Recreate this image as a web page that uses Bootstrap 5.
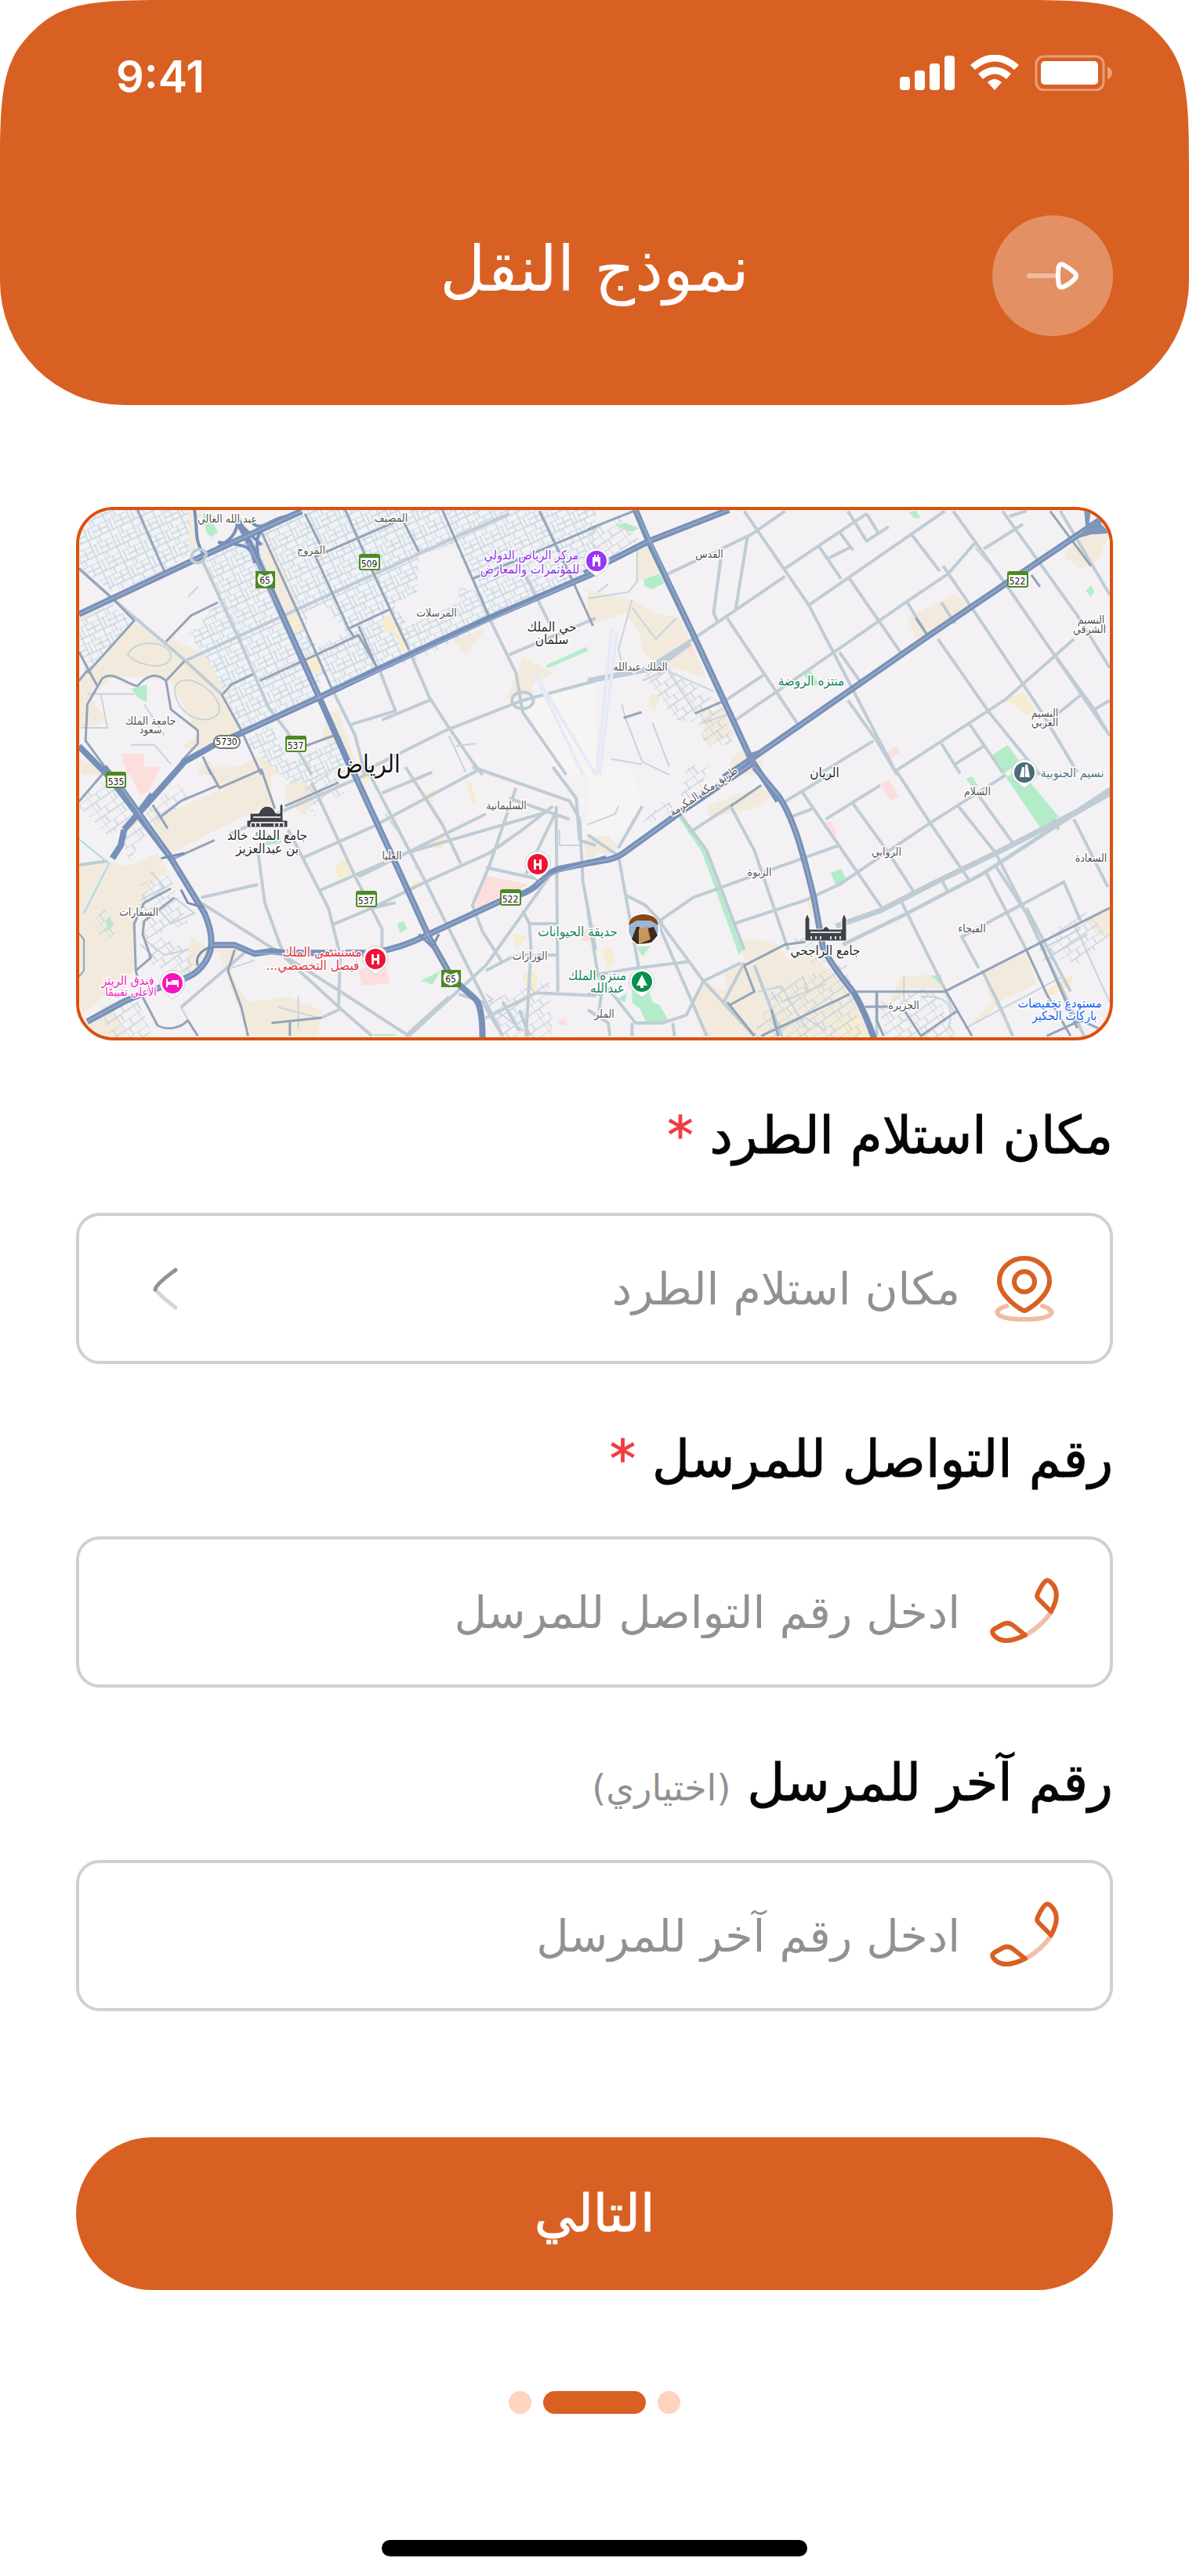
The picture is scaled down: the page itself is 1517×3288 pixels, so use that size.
<!DOCTYPE html>
<html lang="ar" dir="rtl">
<head>
<meta charset="utf-8">
<meta name="viewport" content="width=device-width, initial-scale=1">
<title>نموذج النقل</title>
<link href="https://cdn.jsdelivr.net/npm/bootstrap@5.3.0/dist/css/bootstrap.min.css" rel="stylesheet">
<style>
  :root { --brand: #d96023; --line: #d0d0d0; --hint: #919191; --gutter: 97px; }
  body { font-family: "DejaVu Sans", sans-serif; background: #fff; color: #050505; }
  .px-gutter { padding-inline: var(--gutter); }

  .app-header { background: var(--brand); border-radius: 0 0 158px 158px; padding-bottom: 88px; }
  .corner { position: absolute; top: 0; width: 215px; height: 215px; }
  .status-bar { height: 188px; padding: 70px 97px 0 148px; }
  .clock { font: 600 56px/56px Inter, sans-serif; }
  .title-row { padding-top: 87px; }
  .back-btn { width: 154px; height: 154px; background: rgba(255,255,255,.3); }
  .back-spacer { width: 154px; }
  .page-title { font-size: 80px; line-height: 120px; font-weight: 400; padding-bottom: 16px; }

  .map-frame { margin-top: 130px; border: 4px solid #dc500d; border-radius: 48px; }
  .map-frame svg { width: 100%; height: auto; }

  .field-label { font-size: 66px; line-height: 100px; margin-top: 72px; margin-bottom: 48px; -webkit-text-stroke: 1px currentColor; }
  .star { color: #f03c41; }
  .optional { font-size: 46px; line-height: 1; color: var(--hint); -webkit-text-stroke: 0; }
  .field-box { height: 193px; border: 4px solid var(--line); border-radius: 30px; padding-inline: 59px 90px; gap: 32px; }
  .field-icon { width: 100px; height: 100px; }
  .field-input { font-size: 57px; line-height: 90px; height: 100px; color: var(--hint); background: transparent; min-width: 0; }
  .field-input::placeholder { color: var(--hint); opacity: 1; }
  select.field-input { appearance: none; }
  .chevron { width: 40px; height: 64px; }

  .next-btn { height: 195px; margin-top: 161px; background: var(--brand); font-size: 66px; line-height: 100px; -webkit-text-stroke: 1px currentColor; }
  .next-btn:hover { background: #c9561c; }
  .steps { gap: 15px; margin-top: 129px; }
  .step-dot { width: 29px; height: 29px; background: #ffd3bd; }
  .step-now { width: 131px; height: 29px; background: var(--brand); }
  .home-bar { width: 543px; height: 21px; background: #000; margin: 161px auto 25px; }

  .m path { vector-effect: non-scaling-stroke; }
  .hw { fill: none; stroke: #7790b9; stroke-width: 8; stroke-linejoin: round; }
  .hl { fill: none; stroke: #94a8c8; stroke-width: 2; }
  .md { fill: none; stroke: #94a4b9; stroke-width: 3; stroke-linejoin: round; }
  .mn { fill: none; stroke: #bfccd6; stroke-width: 4; stroke-linejoin: round; }
  .th { fill: none; stroke: #c8d3dc; stroke-width: 2; }
  .bg { fill: #f2ebdd; } .yl { fill: #f6ecd0; } .pk { fill: #fcdedd; } .gr { fill: #b3ecc9; } .ld { fill: #f3f1f3; }
  .map-text text { font-family: "DejaVu Sans Condensed", "DejaVu Sans", sans-serif; text-anchor: middle; paint-order: stroke; stroke: #fff; stroke-width: 3px; fill: #555; font-size: 14px; }
  .map-text .t-dark { fill: #2b2b2b; font-size: 17px; }
  .map-text .t-city { fill: #111; font-size: 31px; }
  .map-text .t-green { fill: #16865a; font-size: 17px; }
  .map-text .t-purple { fill: #9334e6; font-size: 16px; }
  .map-text .t-red { fill: #e03846; font-size: 17px; }
  .map-text .t-pink { fill: #f01cc0; font-size: 16px; }
  .map-text .t-slate { fill: #5a7684; font-size: 16px; }
  .map-text .t-blue { fill: #1a66ef; font-size: 16px; }
  .map-text .t-num { fill: #222; stroke: none; font-size: 12px; }
</style>
</head>
<body>
<header class="app-header position-relative text-white">
  <svg class="corner start-0" viewBox="0 0 215 215" aria-hidden="true"><path fill="#fff" d="M0 0H215C150 0 105 1 73 17C52 27 27 52 17 73C1 105 0 150 0 215Z"/></svg>
  <svg class="corner end-0" viewBox="0 0 215 215" aria-hidden="true"><path fill="#fff" d="M215 0H0C65 0 110 1 142 17C163 27 188 52 198 73C214 105 215 150 215 215Z"/></svg>
  <div class="status-bar d-flex justify-content-between align-items-start" dir="ltr">
    <span class="clock">9:41</span>
    <svg width="272" height="46" viewBox="1148 70 272 46" fill="#fff" aria-hidden="true">
      <rect x="1148" y="98" width="13" height="17" rx="4"/><rect x="1167" y="90" width="13" height="25" rx="4"/><rect x="1186" y="81" width="13" height="34" rx="4"/><rect x="1205" y="71" width="13" height="44" rx="4"/>
      <path d="M1238 83Q1269 56 1300 83L1294 89Q1269 68 1244 89Z"/>
      <path d="M1248 94Q1269 77 1290 94L1284 101Q1269 88 1254 101Z"/>
      <path d="M1260 105Q1269 97 1278 105L1269 115Z"/>
      <rect x="1322" y="72" width="86" height="43" rx="10" fill="none" stroke="#fff" stroke-width="3" opacity=".4"/>
      <rect x="1328" y="78" width="73" height="30" rx="5"/>
      <path opacity=".4" d="M1413 85Q1419 88 1419 93T1413 102Z"/>
    </svg>
  </div>
  <div class="title-row px-gutter d-flex align-items-center">
    <button type="button" class="back-btn btn rounded-circle border-0 p-0 flex-shrink-0" aria-label="رجوع">
      <svg width="154" height="154" viewBox="1266 275 154 154" fill="none" stroke="#fff" stroke-width="6" stroke-linecap="round" stroke-linejoin="round" aria-hidden="true"><path opacity=".4" d="M1313 352H1348"/><path d="M1350 352C1350 345 1350 343 1351 340Q1352 336 1357 338Q1366 343 1372 349Q1374 352 1372 355Q1366 362 1357 366Q1352 368 1351 364Q1350 360 1350 352Z"/></svg>
    </button>
    <h1 class="page-title flex-fill text-center m-0">نموذج النقل</h1>
    <span class="back-spacer flex-shrink-0"></span>
  </div>
</header>

<main class="px-gutter">
  <div class="map-frame overflow-hidden">
    <svg class="m d-block" viewBox="101 652 1315 673" role="img" aria-label="خريطة الرياض">
      <defs>
        <pattern id="blocks" width="30" height="22" patternUnits="userSpaceOnUse" patternTransform="rotate(-25)"><rect width="30" height="22" fill="#f0f2f5"/><path d="M0 0H30M0 7H20M0 14H30M10 0V14M20 0V22M0 0V22M5 14V22M25 0V14" stroke="#c9d4dd" stroke-width="1.4" fill="none"/></pattern>
        <pattern id="blocks2" width="26" height="20" patternUnits="userSpaceOnUse" patternTransform="rotate(-35)"><path d="M0 0H26M0 10H26M0 0V20M13 0V10M6 10V20" stroke="#c8d3dc" stroke-width="1.5" fill="none"/></pattern>
      </defs>
      <rect x="90" y="640" width="1340" height="700" fill="#f3f1f3"/>

      <!-- areas -->
      <g transform="translate(90 640) scale(.4273 .3333)">
        <path class="bg" d="M330 35H390L375 190L280 270L120 365L25 430V470L100 420L270 290L300 220L325 180ZM60 640L190 470L250 500L410 590L470 740L510 880L380 960L330 940L380 900L300 690L130 670L60 760L120 850L25 870V690ZM560 170L600 180L690 430L660 440ZM770 810L800 805L850 1000L870 1050H840L750 900ZM1140 530L1240 490L1180 590ZM1350 600L1445 660L1380 700L1380 740L1300 760ZM1400 40H1500L1420 90ZM560 980L620 1000V1050H380L400 980L450 1050ZM150 1050H30L25 990Z"/>
        <path class="ld" d="M130 760L190 780L210 830L280 900L260 1010L120 1050L60 930Z"/>
        <path class="pk" d="M150 970H218V1010L260 1050H170ZM570 390L590 380L595 405L575 415Z"/>
        <path class="gr" d="M183 720L228 705V770L200 755ZM1420 630L1540 560L1545 575L1425 642Z"/>
        <path fill="#f6f5f3" d="M1380 740L1568 700V1050H1450L1350 810Z"/>
      </g>
      <path fill="url(#blocks)" d="M101 652H240L242 708L208 732L145 757L101 725ZM262 714L390 652H760V730L620 797L545 838L408 885L352 913L308 935L284 880L270 850L240 810L262 790L278 760ZM101 795L140 770L168 795L110 860L101 830ZM310 945L345 925L370 975L430 945L445 985L390 1000L405 1050L380 1010ZM290 890L400 835L405 882L310 925Z"/>
      <g transform="translate(90 640) scale(.4273 .3333)">
        <path class="bg" d="M560 170L600 180L690 430L640 450Z"/>
        <path class="yl" d="M640 440L670 430L695 490L665 510ZM700 605L735 595L750 650L720 665ZM930 460L955 430L975 495L1020 590L995 595L970 510L935 500Z"/>
        <path class="ld" d="M200 455L310 300L345 360L440 400L360 440L285 540ZM1040 210L1145 165L1210 345L1160 330V390L1010 480L965 400L1035 350ZM380 130C380 90 410 40 440 40C500 60 490 110 470 150C450 180 380 200 380 130ZM710 420L760 400L820 500L740 560L700 500ZM740 670L780 660L780 720L750 740Z"/>
        <path class="gr" d="M395 50H410L440 120L420 140L405 120Z"/>
      </g>
      <g transform="translate(750 640) scale(.4337 .3333)">
        <path class="bg" d="M145 180L180 160L220 270L140 310ZM0 340L50 360L130 380L200 430L270 450L300 530L350 680L280 650L200 620L160 580L150 500L110 430L0 480ZM940 450L1080 355L1120 400L970 545ZM1400 210L1460 120L1535 130L1500 230L1450 265ZM330 820L400 790L430 900L350 935ZM420 980L470 950L520 1000L490 1050H420ZM180 740H215L200 800L180 790Z"/>
        <path class="yl" d="M1230 760L1280 735L1320 800L1290 820Z"/>
        <path class="gr" d="M165 300L210 280L225 315L190 340L165 325ZM80 95L110 85L150 105L130 120ZM945 45L965 38L978 65L960 68ZM1465 345L1480 325L1490 345L1480 370ZM635 665L655 650L680 700L660 715ZM1190 975L1235 935L1270 1000L1220 1050Z"/>
        <path class="pk" d="M290 555L305 545L318 590L300 600ZM875 970L908 940L918 962L885 992Z"/>
      </g>
      <g transform="translate(90 980) scale(.4273 .3333)">
        <path class="bg" d="M240 150L270 190L440 90L400 0H600V140L470 220L300 330L250 230ZM25 380L120 360L170 380L260 330L290 400L240 450L190 600L190 780L25 960ZM360 650L420 700L510 690L490 730L480 800L530 900L650 880L750 930L740 1030H530L440 700L330 840ZM25 990L120 900L170 1030H60ZM640 70L690 50L740 90L700 190L640 130ZM1530 280H1568V360H1540Z"/>
        <path class="yl" d="M790 380L820 350L840 410L800 430ZM1045 110L1090 85L1080 150ZM1180 60H1195L1215 140H1200ZM1055 290L1120 250L1110 320ZM1320 640L1365 645L1330 700ZM1350 790H1395L1390 860L1360 850ZM1010 460L1040 430L1050 450L1020 470ZM860 20L900 30L880 70Z"/>
        <path class="pk" d="M170 0H270L230 100L205 105ZM1240 415L1365 450L1280 520L1205 540ZM860 775L940 760L955 830L870 835ZM1455 968L1480 965L1482 990L1460 988ZM1520 640L1568 600V660L1530 670Z"/>
        <path class="gr" d="M570 290L625 265L630 290L580 300ZM975 600L995 592L1005 620L985 635ZM1045 820L1105 780L1080 835L1065 825ZM105 590L115 575L125 610L112 630ZM905 1022H970V1030H905Z"/>
      </g>
      <g transform="translate(750 980) scale(.4337 .3333)">
        <path fill="#f6f5f3" d="M0 0H130L160 160L120 260L0 270Z"/>
        <path class="bg" d="M430 110L510 75L540 110L510 150L360 195L350 150ZM450 660L500 660L560 680L590 740L660 700L700 770L790 870L840 1030H340L300 900L340 820L410 860L400 790L460 750ZM1160 780L1290 710L1320 830L1190 910ZM880 920L920 800L1020 795L1050 850H950ZM1460 580L1535 530V640L1500 650ZM1130 980L1200 880L1200 920L1150 980ZM0 270L60 260L90 310L60 340L0 320Z"/>
        <path class="yl" d="M640 500H660V580ZM740 980L790 940L820 1030H740ZM40 700L65 690L80 740L60 780ZM1340 860L1430 790L1420 840L1350 880Z"/>
        <path class="gr" d="M1230 40L1270 10L1385 190L1335 240ZM1113 45L1130 36L1148 70L1135 85ZM715 405L745 390L760 430L730 455ZM265 190L275 190L345 310L380 440L455 700L445 720L370 450L335 325ZM130 850L180 860L190 900L210 910L240 975L170 975L155 930L130 900ZM85 890L115 865L110 900ZM1010 800L1040 795L1035 830Z"/>
        <path class="pk" d="M860 65L885 50L915 115L890 130ZM700 210L712 205L735 255L722 262Z"/>
      </g>
      <path fill="url(#blocks2)" d="M750 680L790 660L815 690L780 712L755 705ZM820 860L850 850L920 900L915 925L860 920ZM890 920L922 905L935 950L900 955ZM875 980L905 975L890 1020H868ZM820 1050L850 1020L862 1035L825 1055ZM1010 1200L1045 1195L1060 1225L1040 1235ZM990 1260L1080 1230L1100 1325H960ZM1325 1200L1385 1165L1416 1195L1380 1230L1335 1225ZM1120 1280L1190 1260L1220 1325H1130ZM130 1290L175 1275L195 1325H140ZM190 1030L230 1000L240 1020L270 1000L190 1060L165 1100L155 1070ZM120 1000L150 995L170 1040L140 1070L100 1030ZM385 1000L425 985L440 1015L400 1030ZM180 1130L215 1115L240 1180L200 1195L250 1215L240 1250L190 1230L180 1180ZM115 1180L135 1160L150 1190L135 1205ZM620 1280L700 1250L705 1325H640Z"/>

      <!-- minor streets -->
      <g transform="translate(90 640) scale(.4273 .3333)">
        <path class="mn" d="M340 615L500 520L1150 140L1310 50M390 220L500 520L590 790L650 890L720 1050M25 260L130 380L340 610L450 740M1010 570L1070 750L1130 870L1200 1000L1230 1050M920 640L970 805L830 860M930 840L1080 760M1250 450L1330 660L1350 810L1480 1050M1568 690L1350 765L1120 880L870 1040M1310 590L1568 450M780 720L850 900L880 1050M1360 290L1430 470"/>
        <path class="th" d="M180 935H250L300 1010M220 780L280 900M90 740L110 870H30M310 720C330 640 440 720 445 800C440 860 320 860 310 720M170 590C200 520 300 540 300 600C290 650 210 640 170 590M350 370L380 330M50 740L190 740M1130 900L1180 1040M1210 930L1150 940"/>
        <path d="M1385 660L1568 1050M1400 700L1530 1050" stroke="#e6e9f6" stroke-width="4" fill="none"/>
      </g>
      <g transform="translate(750 640) scale(.4337 .3333)">
        <path class="mn" d="M460 40L650 400L910 1050M220 290L400 180L480 130L580 40M395 185L370 430L380 460M470 135L435 415M580 260L820 50M310 530L580 290M650 400L1050 40M765 290L925 590M950 125L1035 270M680 175L745 300M740 120L780 190M765 40L820 155L885 100M820 50L855 125M710 220L770 180M1075 40L1240 340L1430 700L1535 900M435 840L780 530L940 385L1060 280M410 450L620 860M1045 250L1140 430L1330 800L1440 1040M1165 185L1280 90M1060 280L1140 160M1220 40L1440 440L1535 640M1390 40L1535 360M1030 530L1180 810L1330 1050M765 765L850 920L910 1050M940 390L1000 520M400 770L520 665M200 620L310 530M900 1040L1230 760L1430 530M1370 585L1490 800L1535 900M1240 60L1290 40M1490 800L1535 765M1330 870L1450 745M1120 850L1220 1040M1040 930L1095 1045M1080 1010L1170 935M840 920L690 1040M800 690L740 580M1040 390L1080 470"/>
        <path class="mn" style="stroke-width:7" d="M0 690L200 640L300 545"/>
        <path class="th" d="M0 375L120 350L145 310V190M130 410L200 530L260 450M100 620L90 570L130 380M320 820L230 640M160 690L230 650L370 730M340 850L410 820M100 780L110 830L160 1000L240 1050M190 850L240 1020M30 350L60 320M1140 180L1180 240M70 990L160 1010"/>
        <path d="M70 490L25 1050M85 500L35 1050" stroke="#e6e9f6" stroke-width="4" fill="none"/>
      </g>
      <g transform="translate(90 980) scale(.4273 .3333)">
        <path class="mn" d="M720 60L850 420L930 620L930 720M890 20L1060 440L1200 800L1290 1030M930 100L1080 20M1000 0L1110 220L1165 370M860 420L1240 180M690 350L900 230L1220 10M740 475L1000 330L1430 170M780 605L900 540L1060 440L1250 330L1350 240L1440 150M390 500L560 450M560 330L580 520L640 730L810 930L900 1030M390 520L830 880L1010 1030M650 240L770 540L805 720L800 930L750 960M1330 80L1250 380L1200 530L1230 630L1290 750M1450 150L1455 860M1310 120L1490 200M1240 385L1400 430M1450 170L1360 410M1440 400L1240 760L1010 1030M1370 600H1450M1370 600L1375 700L1360 1030M1350 550L1370 600M1240 780L1330 720H1450M1130 880L1000 1030M1240 960L1390 865L1568 875M1200 0L1490 130L1520 200M1520 200L1530 440L1568 700M1160 870L1230 900L1290 1030M1440 0L1510 120L1520 280L1568 300M970 520L900 540M330 920L530 700M0 380L110 360M1340 930L1370 1030M1290 900L1340 1010"/>
        <path class="th" d="M240 400L280 460L210 510M260 540L300 600L370 560L310 500M220 660L280 720L350 700M210 680L250 730M330 920L360 990M480 770L550 740M1230 970L1280 940L1350 1010M1240 870L1260 890L1220 920M940 180L980 250M1030 380L1060 430M1460 240V300H1520M680 880V1000M620 920L740 960"/>
        <path d="M0 250L115 370L40 560" stroke="#a5dce8" stroke-width="2" fill="none"/>
        <path class="md" style="stroke-width:2" d="M0 600L40 660V780L0 840"/>
      </g>
      <g transform="translate(750 980) scale(.4337 .3333)">
        <path class="mn" style="stroke-width:7" d="M730 610L860 550L1010 450L1200 330L1440 170L1568 60"/>
        <path class="mn" style="stroke-width:5" d="M750 680L940 560L1160 410L1420 190L1568 80"/>
        <path class="mn" d="M90 340L150 770M270 180L350 320L460 700M420 150L490 320L590 700M630 95L865 540M300 250L430 140M570 140L710 30M700 200L860 70M780 140L880 320L960 480M430 600L640 510L740 450L1000 220L1230 30M910 20L1010 220L1120 430M1090 150L1200 330L1290 560L1460 1030M1150 110L1250 290M1200 380L1290 560M1290 540L1420 860M1170 400L1290 700M920 510L1050 850M1230 560L1400 440L1450 590M1150 770L1100 650L1270 530M600 190L660 160M90 340L0 260M210 590L310 500L480 420L740 300M210 590L340 820L490 1030M110 490L170 530L220 600M200 580L350 1030M450 750L340 820L290 950L220 980H140L110 930L30 800L0 550M0 800L140 770L300 745M250 980L255 1030M1430 200L1530 460M0 930L60 980L65 1030M130 980V1030M0 870H40L30 960M1040 430L1060 480M160 150L90 310M850 860V1030M1160 780L1210 910L1250 1030M1370 200L1385 240M490 760L570 1030M460 750L400 900"/>
        <path class="th" d="M500 860L570 840L640 1000M540 860L560 900M570 900L700 830M650 860L630 800M1050 860L1080 950M1110 1000L1400 800M1200 900L1240 1000M1330 700L1450 620M1430 600L1535 900M1340 740L1470 640M0 220L80 180L90 150M560 1000L640 960L700 1010M930 800V900M980 880C1060 870 1080 920 1060 1000"/>
      </g>

      <!-- main streets -->
      <g transform="translate(90 640) scale(.4273 .3333)">
        <path class="md" d="M200 35L280 270M570 120L680 430L780 720M700 50L750 180M730 210L830 490L845 520M820 35L880 210L1010 570M990 70L1040 195M730 215L990 70M1110 35L1250 445M1400 40L1500 310L1560 480M1200 300L1568 100M285 540L360 440L440 390M565 690L860 515L915 640M455 740L480 705L545 665M830 490L955 415M700 940L785 900M340 615L285 690L300 800L380 880L380 930L330 1000M450 740L510 880L570 1050M50 660L190 460L130 380L25 260M25 580L80 710M285 690C250 650 220 680 200 710C160 700 130 650 95 680L50 780L45 920L120 1050M25 690L50 650M395 980L420 1050M860 480L915 640"/>
      </g>
      <g transform="translate(750 640) scale(.4337 .3333)">
        <path class="md" d="M0 110L135 40M1360 40L1480 250M1305 285L1330 330M965 450L1005 525M315 815L395 770M105 832L158 810"/>
      </g>
      <g transform="translate(90 980) scale(.4273 .3333)">
        <path class="md" d="M0 170L100 20M410 0L445 80L570 10L610 160M640 150L800 60M270 190L330 130L440 70M245 145L290 235M310 350L430 280M300 465L220 520L190 600L195 780L240 730L215 640L220 590L310 500M195 780L215 880L260 990C290 1010 330 1000 350 970L380 1030M490 700L470 780L510 920L530 1030M600 980L750 960M655 970V1030"/>
        <path class="mn" d="M470 260L900 20"/>
      </g>
      <g transform="translate(750 980) scale(.4337 .3333)">
        <path class="md" d="M460 760L490 860L420 910M460 760L580 680L640 670M790 860H1050L1290 700L1535 540M1290 700L1350 870L1420 1030M1330 670L1440 1000M1050 850L1130 1030M410 900L490 1030M510 1030L770 870M850 860V970L870 1030M815 918H890M930 930L980 1030L1085 935M1350 1030L1450 970L1535 1020M420 150L510 70M540 930L560 1030"/>
      </g>

      <!-- highways -->
      <g transform="translate(90 640) scale(.4273 .3333)">
        <path class="hw" d="M25 435L390 215L690 40M490 55L550 200L640 460L745 760L835 1020M1568 275L1250 450L920 645L740 755L510 890L430 935L340 1000L160 1260M25 940L110 1050L300 1370"/>
        <path class="hw" style="stroke-width:4" d="M500 60C500 150 460 160 400 210M540 80C570 130 600 60 650 60M440 160C540 170 540 180 550 240M600 90C540 120 560 180 560 220M370 35C380 120 370 150 395 200M490 70L570 170"/>
        <path class="hl" d="M25 435L390 215L690 40M530 160L640 460L745 760M1568 275L740 755L510 890"/>
        <path class="mn" d="M365 205A20 20 0 1 1 400 220A20 20 0 1 1 365 205M1330 740A25 25 0 1 1 1370 790A25 25 0 1 1 1330 740"/>
      </g>
      <g transform="translate(750 640) scale(.4337 .3333)">
        <path class="hw" d="M-10 280L180 155L415 35M140 35L180 160L320 540L480 990L560 1150M400 1060L480 990L1000 520L1500 80L1535 50"/>
        <path class="hl" d="M-10 280L180 155L415 35M140 35L320 540L480 990L560 1150M400 1060L480 990L1000 520L1500 80"/>
        <path fill="#7f96bb" d="M460 955L480 965L515 950L490 990L510 1040L480 1010L440 1045L470 995ZM1460 35H1480L1475 85L1500 75L1535 125L1480 130L1440 145L1465 110Z"/>
      </g>
      <g transform="translate(90 980) scale(.4273 .3333)">
        <path class="hw" d="M845 20L960 340L1070 650L1140 810L1210 890Q1230 920 1230 1040M100 0L150 80L300 350L400 560C430 650 430 720 380 780C350 820 230 850 150 905L50 975M425 682H490L550 715L600 705L640 712H900C960 700 1010 680 1070 640L1290 510Q1380 480 1400 440Q1430 400 1460 390L1568 362L1600 350M160 240L150 300L125 350"/>
        <path class="hl" d="M845 20L960 340L1070 650L1140 810M120 20L300 350L400 560C430 650 430 720 380 780C350 820 230 850 150 905L50 975M425 682H490L550 715H900C960 700 1010 680 1070 640L1290 510M1390 450Q1430 400 1568 362"/>
        <path class="hw" style="stroke-width:3" d="M270 350L340 330M290 340L310 380M330 470L350 520L400 540M380 760C370 720 400 690 430 690M1040 640L1080 690L1100 640M205 160L240 100"/>
      </g>
      <g transform="translate(750 980) scale(.4337 .3333)">
        <path class="hw" d="M0 368L60 355Q90 345 110 325L270 175L480 -10M490 0L560 110C610 200 640 370 665 500L690 680Q700 730 780 860Q810 920 845 1050"/>
        <path class="hl" d="M0 368L60 355Q90 345 110 325L270 175L480 -10M490 0L560 110C610 200 640 370 665 500L690 680Q700 730 780 860"/>
      </g>

      <!-- route shields and place names -->
      <g class="map-text">
        <g fill="#fff" stroke="#4b8b22" stroke-width="2">
          <rect x="459" y="709" width="25" height="19" rx="2"/><rect x="365" y="941" width="25" height="19" rx="2"/><rect x="1286" y="731" width="25" height="19" rx="2"/><rect x="136" y="987" width="24" height="19" rx="2"/><rect x="455" y="1139" width="25" height="19" rx="2"/><rect x="639" y="1137" width="25" height="19" rx="2"/>
          <rect x="273" y="940" width="33" height="16" rx="8" stroke="#777"/>
        </g>
        <path d="M459 709H484V713H459ZM365 941H390V945H365ZM1286 731H1311V735H1286ZM136 987H160V991H136ZM455 1139H480V1143H455ZM639 1137H664V1141H639Z" fill="#4b8b22"/>
        <path d="M326 730H351V752H326ZM563 1239H588V1261H563Z" fill="#4b8b22"/>
        <path d="M331 733L338 736L346 733Q351 741 346 747L338 750L331 747Q326 741 331 733ZM568 1242L575 1245L583 1242Q588 1250 583 1256L575 1259L568 1256Q563 1250 568 1242Z" fill="#fff"/>
        <text class="t-num" x="471" y="725">509</text><text class="t-num" x="377" y="957">537</text><text class="t-num" x="1298" y="747">522</text><text class="t-num" x="148" y="1003">535</text><text class="t-num" x="467" y="1155">537</text><text class="t-num" x="651" y="1153">522</text><text class="t-num" x="289" y="952">5730</text><text class="t-num" x="338" y="746">65</text><text class="t-num" x="575" y="1255">65</text>

        <text x="290" y="668">عبد الله الغالي</text><text x="499" y="667">المصيف</text><text x="397" y="708">المروج</text><text x="557" y="788">المرسلات</text>
        <text class="t-purple" x="678" y="715">مركز الرياض الدولي</text><text class="t-purple" x="676" y="733">للمؤتمرات والمعارض</text>
        <text class="t-dark" x="704" y="807">حي الملك</text><text class="t-dark" x="704" y="823">سلمان</text>
        <text x="192" y="926">جامعة الملك</text><text x="192" y="937">سعود</text>
        <text class="t-city" x="470" y="987">الرياض</text>
        <text x="905" y="713">القدس</text><text x="817" y="857">الملك عبدالله</text>
        <text class="t-green" x="1035" y="876">منتزه الروضة</text>
        <text x="1392" y="797">النسيم</text><text x="1390" y="809">الشرقي</text><text x="1333" y="916">النسيم</text><text x="1333" y="928">الغربي</text>
        <text class="t-dark" x="1052" y="993">الريان</text>
        <text class="t-slate" x="1368" y="993">نسيم الجنوبية</text>
        <text x="1247" y="1016">السلام</text><text x="1131" y="1093">الروابي</text><text x="969" y="1119">الربوة</text><text x="1392" y="1101">السعادة</text><text x="1240" y="1191">الفيحاء</text><text x="1153" y="1289">الجزيرة</text><text x="771" y="1300">الملز</text><text x="646" y="1034">السليمانية</text><text x="500" y="1098">العليا</text><text x="676" y="1226">الوزارات</text><text x="177" y="1170">السفارات</text>
        <text x="0" y="0" transform="translate(900 1015) rotate(-34)">طريق مكة المكرمة</text>
        <text class="t-dark" x="341" y="1073">جامع الملك خالد</text><text class="t-dark" x="341" y="1090">بن عبدالعزيز</text>
        <text class="t-dark" x="1053" y="1220">جامع الراجحي</text>
        <text class="t-red" x="411" y="1222">مستشفى الملك</text><text class="t-red" x="399" y="1239">فيصل التخصصي...</text>
        <text class="t-pink" x="163" y="1258">فندق الريتز</text><text x="167" y="1272" style="fill:#f01cc0">الأعلى تقييمًا</text>
        <text class="t-green" x="737" y="1196">حديقة الحيوانات</text>
        <text class="t-green" x="762" y="1252">منتزه الملك</text><text class="t-green" x="775" y="1268">عبدالله</text>
        <text class="t-blue" x="1352" y="1287">مستودع تخفيضات</text><text class="t-blue" x="1358" y="1303">باركات الحكير</text>
      </g>

      <!-- pins -->
      <g fill="#fff" stroke="#c9ccd2" stroke-width="1">
        <path id="pin" d="M761 737L751 729A16 16 0 1 1 771 729Z"/>
        <use href="#pin" x="-75" y="387"/><use href="#pin" x="-282" y="508"/><use href="#pin" x="-541" y="539"/><use href="#pin" x="546" y="270"/><use href="#pin" x="58" y="537"/>
      </g>
      <circle cx="761" cy="717" r="13" fill="#9a35f5"/><circle cx="686" cy="1104" r="13" fill="#f01436"/><circle cx="479" cy="1225" r="13" fill="#f01436"/><circle cx="220" cy="1256" r="13" fill="#fa13bd"/><circle cx="1307" cy="987" r="13" fill="#4d6a78"/><circle cx="819" cy="1254" r="13" fill="#07914f"/>
      <path fill="#b3ecc9" d="M812 1210L830 1208L820 1222Z"/>
      <circle cx="821" cy="1187" r="20" fill="#9cb5d6" stroke="#fff" stroke-width="2"/>
      <path fill="#fff" d="M756 712H758V709H760V712H762V709H764V712H766V724H763V718H759V724H756ZM681 1098H684V1103H688V1098H691V1111H688V1106H684V1111H681ZM474 1219H477V1224H481V1219H484V1232H481V1227H477V1232H474ZM212 1250H214V1254H219V1252H228V1261H226V1258H214V1261H212ZM1301 993L1304 980H1307V993ZM1308 993V977H1311L1314 993ZM819 1245L826 1259H821V1262H817V1259H812Z"/>
      <path fill="#8b4513" d="M802 1182Q803 1169 821 1168Q839 1169 840 1182L830 1176H812Z"/><path fill="#3d2a1c" d="M806 1200L812 1184H816V1200H822V1187L834 1184L839 1195L831 1204L813 1206Z"/><path fill="#c9955e" d="M815 1206V1187L826 1183L830 1200Z"/>
      <g fill="#3f4247" stroke="#fff" stroke-width="1">
        <path d="M315 1057V1048H319V1039H330Q334 1030 341 1030T352 1039H357V1030L359 1026L361 1030V1048H367V1057Z"/>
        <path d="M1027 1202V1174L1030 1167L1033 1174V1187H1050Q1054 1180 1058 1187H1074V1174L1077 1167L1080 1174V1202Z"/>
      </g>
      <path stroke="#d9dadd" stroke-width="2" fill="none" d="M320 1051H363M323 1044H358M320 1056V1052M326 1056V1052M332 1056V1052M350 1056V1052M356 1056V1052M362 1056V1052M1034 1191H1073M1035 1200V1196M1041 1200V1196M1047 1200V1196M1060 1200V1196M1066 1200V1196M1072 1200V1196"/>
    </svg>
  </div>

  <form>
    <label class="field-label d-block" for="pickup">مكان استلام الطرد <span class="star">*</span></label>
    <div class="field-box d-flex align-items-center">
      <svg class="field-icon flex-shrink-0" viewBox="0 0 100 100" fill="none" stroke="#d96023" stroke-width="6" stroke-linecap="round" stroke-linejoin="round" aria-hidden="true"><path opacity=".42" d="M27 72C7 78 12 89 50 89S93 78 73 72"/><path d="M50 78C47 78 18 60 18 40A32 29 0 0 1 82 40C82 60 53 78 50 78Z"/><circle cx="50" cy="41" r="13"/></svg>
      <select id="pickup" class="field-input border-0 p-0 flex-fill"><option>مكان استلام الطرد</option></select>
      <svg class="chevron flex-shrink-0" viewBox="0 0 40 64" fill="none" stroke-width="5" stroke-linecap="round" aria-hidden="true"><path stroke="#d5d5d5" d="M8 34Q15 42 33 56"/><path stroke="#919191" d="M33 8Q8 26 7 33"/></svg>
    </div>

    <label class="field-label d-block" for="phone">رقم التواصل للمرسل <span class="star">*</span></label>
    <div class="field-box d-flex align-items-center">
      <svg class="field-icon flex-shrink-0" viewBox="0 0 100 100" fill="none" stroke="#d96023" stroke-width="6" stroke-linejoin="round" aria-hidden="true"><path opacity=".4" d="M84 50Q72 67 52 79"/><path d="M84 49L68 33Q65 30 67 26Q71 17 75 12Q79 7 83 11Q98 24 84 49Z"/><path d="M51 79L36 67Q30 62 23 65L12 71Q7 74 11 79Q23 93 51 79Z"/></svg>
      <input id="phone" type="tel" dir="rtl" class="field-input border-0 p-0 flex-fill" placeholder="ادخل رقم التواصل للمرسل">
    </div>

    <label class="field-label d-block" for="phone2">رقم آخر للمرسل <span class="optional">(اختياري)</span></label>
    <div class="field-box d-flex align-items-center">
      <svg class="field-icon flex-shrink-0" viewBox="0 0 100 100" fill="none" stroke="#d96023" stroke-width="6" stroke-linejoin="round" aria-hidden="true"><path opacity=".4" d="M84 50Q72 67 52 79"/><path d="M84 49L68 33Q65 30 67 26Q71 17 75 12Q79 7 83 11Q98 24 84 49Z"/><path d="M51 79L36 67Q30 62 23 65L12 71Q7 74 11 79Q23 93 51 79Z"/></svg>
      <input id="phone2" type="tel" dir="rtl" class="field-input border-0 p-0 flex-fill" placeholder="ادخل رقم آخر للمرسل">
    </div>

    <button type="submit" class="next-btn btn w-100 rounded-pill border-0 text-white p-0">التالي</button>
  </form>

  <div class="steps d-flex justify-content-center">
    <span class="step-dot rounded-circle"></span><span class="step-now rounded-pill"></span><span class="step-dot rounded-circle"></span>
  </div>
</main>
<div class="home-bar rounded-pill"></div>
<script src="https://cdn.jsdelivr.net/npm/bootstrap@5.3.0/dist/js/bootstrap.bundle.min.js"></script>
</body>
</html>
